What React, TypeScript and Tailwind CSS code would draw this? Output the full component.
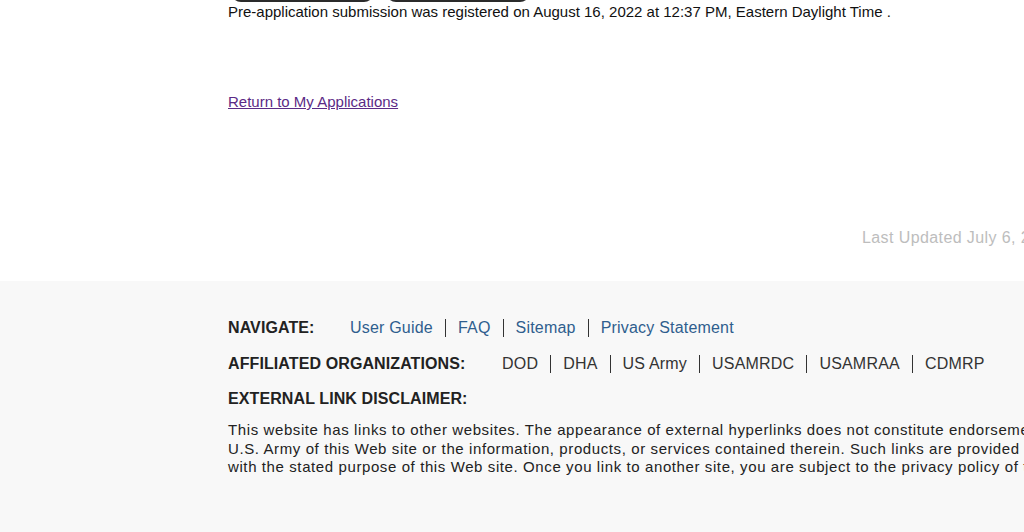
import React from "react";

const navLinks = ["User Guide", "FAQ", "Sitemap", "Privacy Statement"];
const orgs = ["DOD", "DHA", "US Army", "USAMRDC", "USAMRAA", "CDMRP"];

export default function App() {
  return (
    <div
      className="w-[1024px] h-[532px] overflow-hidden bg-white text-[#111]"
      style={{ fontFamily: '"Liberation Sans", Arial, sans-serif' }}
    >
      <div className="w-[1300px]">
        {/* top content */}
        <div className="h-[281px] pl-[228px] pr-[100px] flex flex-col">
          <div className="flex items-end -mt-[30px] h-[32px]">
            <div className="ml-[3px] w-[143px] h-[32px] rounded-[10px] bg-[#2b2b2b]" />
            <div className="ml-[12px] w-[144px] h-[32px] rounded-[10px] bg-[#2b2b2b]" />
            <div className="ml-[400px] w-[200px] h-[30px] border-b border-l border-[#dcdcdc] rounded-bl-[4px] self-start" />
          </div>
          <p className="mt-[1px] text-[15px] leading-[17px] text-[#111] whitespace-nowrap">
            Pre-application submission was registered on August 16, 2022 at 12:37 PM, Eastern Daylight Time .
          </p>
          <a
            href="#"
            className="mt-[73px] self-start text-[15px] leading-[17px] text-[#5b2a86] underline"
          >
            Return to My Applications
          </a>
          <div className="mt-[119px] pl-[634px] text-[16px] leading-[18px] tracking-[0.4px] text-[#bdbdbd] whitespace-nowrap">
            Last Updated July 6, 2022
          </div>
        </div>

        {/* footer */}
        <div className="h-[260px] bg-[#f8f8f8] pl-[228px] pt-[38px]">
          <div className="flex items-center h-[18px] text-[16px] leading-[18px] tracking-[0.2px]">
            <span className="font-bold text-[#222] w-[122px] tracking-[0.1px]">NAVIGATE:</span>
            {navLinks.map((l, i) => (
              <a
                key={l}
                href="#"
                className={`text-[#2f5e8e] ${i === 0 ? "pr-[12px]" : "px-[12px] border-l border-[#333]"}`}
              >
                {l}
              </a>
            ))}
          </div>
          <div className="flex items-center h-[18px] mt-[18px] text-[16px] leading-[18px] tracking-[0.2px]">
            <span className="font-bold text-[#222] w-[274px] tracking-[0.1px]">AFFILIATED ORGANIZATIONS:</span>
            {orgs.map((o, i) => (
              <span
                key={o}
                className={`text-[#333] ${i === 0 ? "pr-[12px]" : "px-[12px] border-l border-[#333]"}`}
              >
                {o}
              </span>
            ))}
          </div>
          <div className="mt-[17px] text-[16px] leading-[18px] font-bold text-[#222] tracking-[0.1px]">
            EXTERNAL LINK DISCLAIMER:
          </div>
          <p className="mt-[13px] text-[15px] leading-[18.5px] tracking-[0.6px] text-[#222] whitespace-nowrap">
            This website has links to other websites. The appearance of external hyperlinks does not constitute endorsement by the
            <br />
            U.S. Army of this Web site or the information, products, or services contained therein. Such links are provided consistent
            <br />
            with the stated purpose of this Web site. Once you link to another site, you are subject to the privacy policy of the new site.
          </p>
        </div>
      </div>
    </div>
  );
}
